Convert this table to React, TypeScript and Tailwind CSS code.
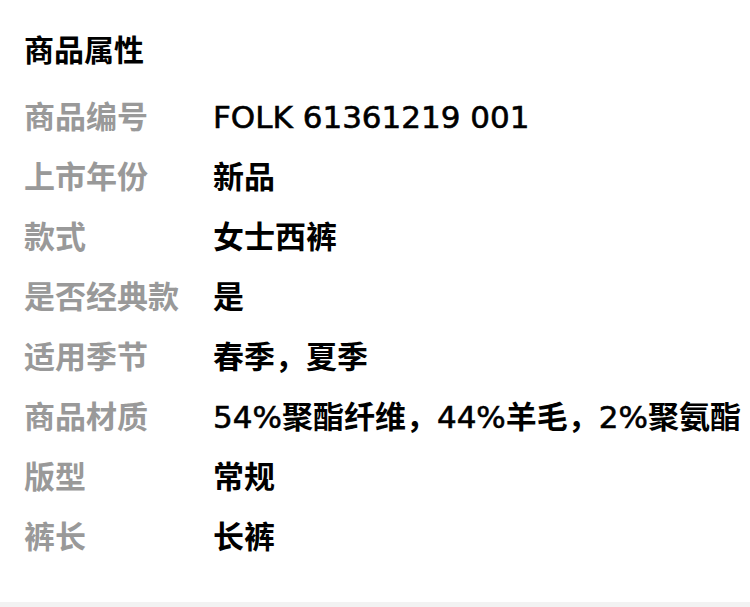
import React from 'react';

const attrs = [
  { label: '商品编号', value: 'FOLK 61361219 001' },
  { label: '上市年份', value: '新品' },
  { label: '款式', value: '女士西裤' },
  { label: '是否经典款', value: '是' },
  { label: '适用季节', value: '春季，夏季' },
  { label: '商品材质', value: '54%聚酯纤维，44%羊毛，2%聚氨酯' },
  { label: '版型', value: '常规' },
  { label: '裤长', value: '长裤' },
];

// latin runs a bit lighter than the CJK ones
const Value = ({ text }: { text: string }) => (
  <span className="text-black font-bold">
    {text.split(/([\x00-\x7F]+)/).map((part, i) =>
      /^[\x00-\x7F]+$/.test(part) ? (
        <span key={i} className="font-medium [-webkit-text-stroke:0.6px_black]">{part}</span>
      ) : (
        part
      )
    )}
  </span>
);

export default function App() {
  return (
    <div className="w-[750px] h-[607px] bg-white overflow-hidden flex flex-col font-['DejaVu_Sans','Noto_Sans_CJK_SC',sans-serif]">
      <div className="flex-1 px-6 pt-[20px]">
        <div className="h-[60px] flex items-center text-[30px] font-bold text-black">商品属性</div>
        <div className="mt-[7px] flex flex-col">
          {attrs.map((a) => (
            <div key={a.label} className="h-[60px] flex items-center text-[31px] whitespace-nowrap">
              <span className="w-[189px] shrink-0 text-[#999999] font-bold">{a.label}</span>
              <Value text={a.value} />
            </div>
          ))}
        </div>
      </div>
      <div className="h-[5px] bg-[#f2f2f2]" />
    </div>
  );
}
